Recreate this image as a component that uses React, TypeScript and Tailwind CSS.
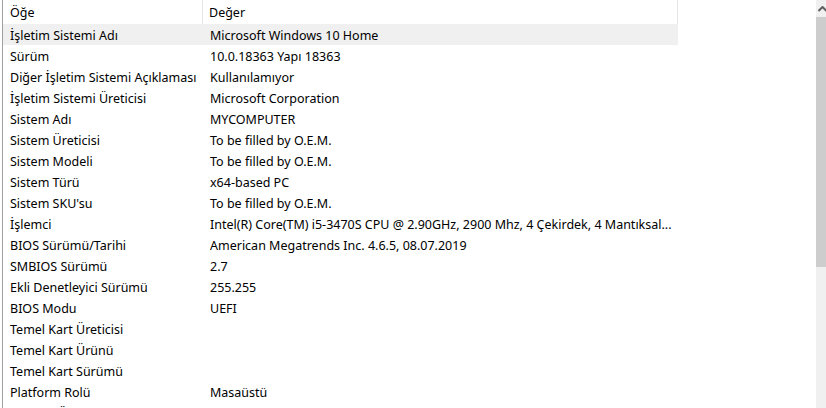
const rows: [string, string][] = [
  ["İşletim Sistemi Adı", "Microsoft Windows 10 Home"],
  ["Sürüm", "10.0.18363 Yapı 18363"],
  ["Diğer İşletim Sistemi Açıklaması", "Kullanılamıyor"],
  ["İşletim Sistemi Üreticisi", "Microsoft Corporation"],
  ["Sistem Adı", "MYCOMPUTER"],
  ["Sistem Üreticisi", "To be filled by O.E.M."],
  ["Sistem Modeli", "To be filled by O.E.M."],
  ["Sistem Türü", "x64-based PC"],
  ["Sistem SKU'su", "To be filled by O.E.M."],
  ["İşlemci", "Intel(R) Core(TM) i5-3470S CPU @ 2.90GHz, 2900 Mhz, 4 Çekirdek, 4 Mantıksal..."],
  ["BIOS Sürümü/Tarihi", "American Megatrends Inc. 4.6.5, 08.07.2019"],
  ["SMBIOS Sürümü", "2.7"],
  ["Ekli Denetleyici Sürümü", "255.255"],
  ["BIOS Modu", "UEFI"],
  ["Temel Kart Üreticisi", ""],
  ["Temel Kart Ürünü", ""],
  ["Temel Kart Sürümü", ""],
  ["Platform Rolü", "Masaüstü"],
  ["Güvenli Önyükleme Durumu", "Kapalı"],
];

export default function App() {
  return (
    <div
      className="w-[826px] h-[408px] overflow-hidden bg-white flex text-[12.5px] text-black"
      style={{ fontFamily: '"Noto Sans", "Segoe UI", sans-serif' }}
    >
      <div className="w-[2px]" />
      <div className="w-px bg-[#a0a0a0]" />
      <div className="flex-1 flex flex-col">
        <div className="flex h-[24px] items-center shrink-0">
          <div className="w-[200px] h-full pl-[7px] pt-[3px] flex items-center border-r border-[#e5e5e5]">
            Öğe
          </div>
          <div className="w-[475px] h-full pl-[6px] pt-[3px] flex items-center border-r border-[#e5e5e5]">
            Değer
          </div>
        </div>
        {rows.map(([k, v], i) => (
          <div
            key={k}
            className={
              i === 0
                ? "flex h-[21px] items-center pt-[4px] shrink-0 w-[675px] bg-[#f0f0f0]"
                : "flex h-[21px] items-center pt-[4px] shrink-0 w-[675px]"
            }
          >
            <div className="w-[200px] pl-[7px] whitespace-nowrap">{k}</div>
            <div className="pl-[7px] whitespace-nowrap">{v}</div>
          </div>
        ))}
      </div>
      <div className="w-[10px] flex flex-col bg-[#f0f0f0]">
        <div className="h-[17px] flex items-center justify-end">
          <svg width="9" height="6" viewBox="0 0 9 6" className="mr-[-1px]">
            <path d="M0.5 5 L4.5 1 L8.5 5" stroke="#606060" strokeWidth="2" fill="none" />
          </svg>
        </div>
        <div className="h-[250px] bg-[#cdcdcd]" />
      </div>
    </div>
  );
}
